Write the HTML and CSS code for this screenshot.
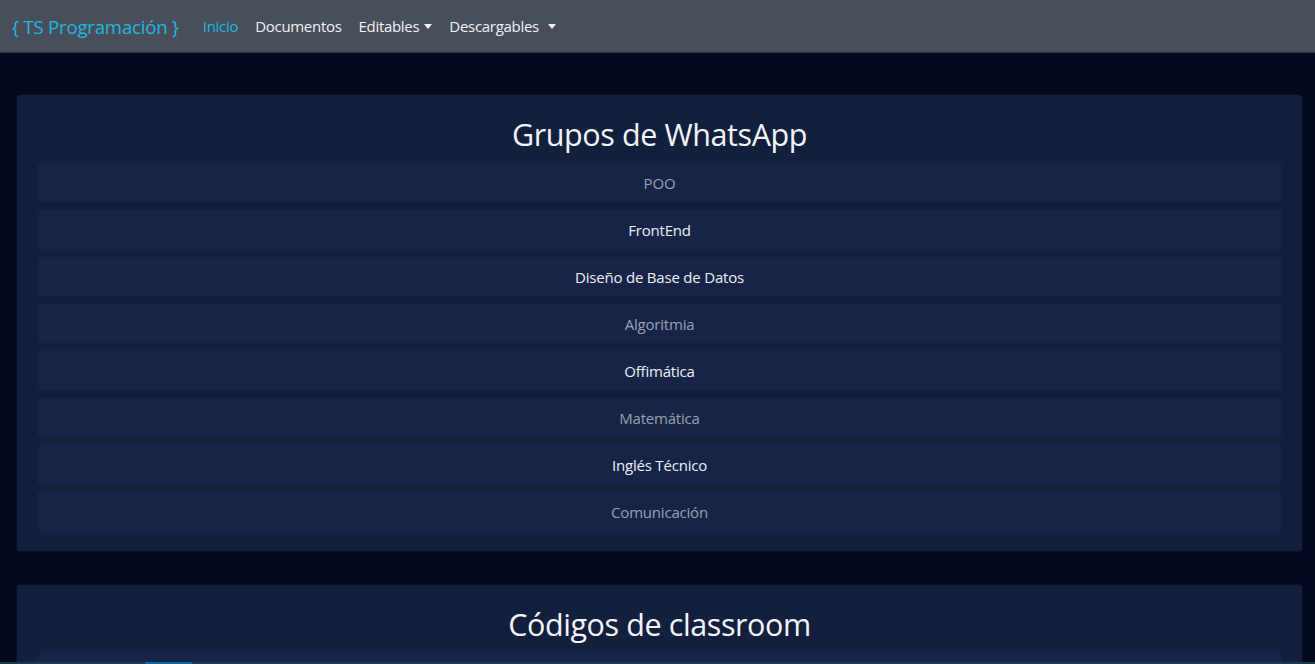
FILE: index.html
```html
<!DOCTYPE html>
<html lang="es">
<head>
<meta charset="utf-8">
<title>TS Programación</title>
<link rel="stylesheet" href="styles.css">
</head>
<body>
<nav class="navbar">
  <a class="brand" href="#">{ TS Programación }</a>
  <ul class="nav">
    <li><a class="nav-link active" href="#">Inicio</a></li>
    <li><a class="nav-link" href="#">Documentos</a></li>
    <li><a class="nav-link dropdown" href="#">Editables</a></li>
    <li><a class="nav-link dropdown wide" href="#">Descargables</a></li>
  </ul>
</nav>
<main class="main">
  <section class="card">
    <h2 class="card-title">Grupos de WhatsApp</h2>
    <ul class="list">
      <li class="item muted">POO</li>
      <li class="item">FrontEnd</li>
      <li class="item">Diseño de Base de Datos</li>
      <li class="item muted">Algoritmia</li>
      <li class="item">Offimática</li>
      <li class="item muted">Matemática</li>
      <li class="item">Inglés Técnico</li>
      <li class="item muted">Comunicación</li>
    </ul>
  </section>
  <section class="card">
    <h2 class="card-title">Códigos de classroom</h2>
    <ul class="list">
      <li class="item muted">POO</li>
      <li class="item">FrontEnd</li>
    </ul>
  </section>
</main>
<div class="taskbar"><span class="taskbar-active"></span></div>
</body>
</html>
```
FILE: styles.css
```css
* { box-sizing: border-box; }
html, body { margin: 0; padding: 0; }
body {
  background: #030a1f;
  font-family: "Open Sans", "Noto Sans", sans-serif;
  color: #e6e8ee;
  overflow: hidden;
  height: 664px;
}
.navbar {
  height: 53px;
  background: #494e5b;
  display: flex;
  align-items: center;
  padding: 0 12px;
  border-bottom: 1px solid #2f3440;
}
.brand {
  color: #1fb9e0;
  text-decoration: none;
  font-size: 18.6px;
  margin-right: 24px;
  letter-spacing: -0.2px;
}
.nav {
  list-style: none;
  margin: 0;
  padding: 0;
  display: flex;
  gap: 17px;
}
.nav-link {
  color: #f1f2f5;
  text-decoration: none;
  font-size: 15px;
  letter-spacing: -0.3px;
  display: flex;
  align-items: center;
}
.nav-link.active { color: #1fb9e0; }
.dropdown::after {
  content: "";
  display: inline-block;
  margin-left: 5px;
  border-top: 5px solid #f1f2f5;
  border-left: 4px solid transparent;
  border-right: 4px solid transparent;
}
.dropdown.wide::after { margin-left: 9px; }
.main {
  padding: 42px 13px 0 17px;
  display: flex;
  flex-direction: column;
  gap: 34px;
}
.card {
  background: #13203d;
  border-radius: 4px;
  padding: 18px 20px 20px;
  box-shadow: 0 0 2px rgba(30, 45, 80, 0.6);
}
.card-title {
  margin: 0 0 8px;
  text-align: center;
  font-weight: 400;
  font-size: 30.5px;
  line-height: 42px;
  color: #f4f5f8;
  letter-spacing: -0.4px;
}
.list {
  list-style: none;
  margin: 0;
  padding: 0;
  display: flex;
  flex-direction: column;
  gap: 8px;
}
.item {
  background: #172448;
  border-radius: 3px;
  height: 39px;
  display: flex;
  align-items: center;
  justify-content: center;
  font-size: 15px;
  letter-spacing: -0.2px;
  color: #eef0f4;
}
.item.muted { color: #9ba1ad; }
.taskbar {
  position: fixed;
  left: 0;
  right: 0;
  bottom: 0;
  height: 2px;
  background: #1c3a4e;
}
.taskbar-active {
  position: absolute;
  left: 145px;
  width: 47px;
  top: 0;
  bottom: 0;
  background: #1166a8;
}
```
